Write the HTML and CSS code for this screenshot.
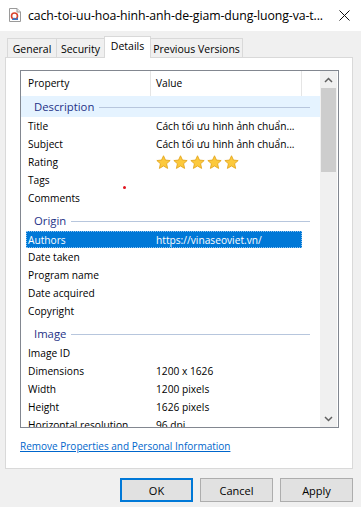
FILE: index.html
```html
<!DOCTYPE html>
<html lang="en">
<head>
    <meta charset="UTF-8">
    <meta name="viewport" content="width=device-width, initial-scale=1.0">
    <title>Properties</title>
    <link rel="stylesheet" href="styles.css">
</head>
<body>

    <div class="titlebar">
        <svg class="file-icon" width="12" height="14" viewBox="0 0 12 14">
            <path d="M0.5 0.5 H8 L11.5 4 V13.5 H0.5 Z" fill="#fff" stroke="#9a9a9a"/>
            <path d="M8 0.5 V4 H11.5" fill="#e8e8e8" stroke="#9a9a9a"/>
            <circle cx="5.5" cy="8" r="3" fill="none" stroke="#d9442f" stroke-width="1.6"/>
            <path d="M3 11.5 L5 9.5 L7 11 L9 9 V12 H3 Z" fill="#3a78c9"/>
        </svg>
        <span class="title">cach-toi-uu-hoa-hinh-anh-de-giam-dung-luong-va-t...</span>
        <svg class="close" width="11" height="11" viewBox="0 0 11 11">
            <path d="M0.5 0.5 L10.5 10.5 M10.5 0.5 L0.5 10.5" stroke="#111" stroke-width="1"/>
        </svg>
    </div>

    <div class="dialog">
        <!-- tab strip -->
        <div class="tabs">
            <div class="tab tab-general">General</div>
            <div class="tab tab-security">Security</div>
            <div class="tab tab-details active">Details</div>
            <div class="tab tab-versions">Previous Versions</div>
        </div>

        <div class="panel">
            <div class="listview">
                <div class="lv-content">
                    <div class="lv-header">
                        <div class="hcol hcol-prop">Property</div>
                        <div class="hcol hcol-value">Value</div>
                        <div class="hcol hcol-rest"></div>
                    </div>

                    <div class="group first hot"><span class="group-name">Description</span><span class="group-line"></span></div>
                    <div class="row"><span class="prop">Title</span><span class="val">Cách tối ưu hình ảnh chuẩn...</span></div>
                    <div class="row"><span class="prop">Subject</span><span class="val">Cách tối ưu hình ảnh chuẩn...</span></div>
                    <div class="row">
                        <span class="prop">Rating</span>
                        <span class="val stars">
                            <svg class="star" viewBox="0 0 16 16"><path d="M8 0.8 L10.1 5.4 L15.1 5.9 L11.3 9.3 L12.4 14.3 L8 11.7 L3.6 14.3 L4.7 9.3 L0.9 5.9 L5.9 5.4 Z"/></svg>
                            <svg class="star" viewBox="0 0 16 16"><path d="M8 0.8 L10.1 5.4 L15.1 5.9 L11.3 9.3 L12.4 14.3 L8 11.7 L3.6 14.3 L4.7 9.3 L0.9 5.9 L5.9 5.4 Z"/></svg>
                            <svg class="star" viewBox="0 0 16 16"><path d="M8 0.8 L10.1 5.4 L15.1 5.9 L11.3 9.3 L12.4 14.3 L8 11.7 L3.6 14.3 L4.7 9.3 L0.9 5.9 L5.9 5.4 Z"/></svg>
                            <svg class="star" viewBox="0 0 16 16"><path d="M8 0.8 L10.1 5.4 L15.1 5.9 L11.3 9.3 L12.4 14.3 L8 11.7 L3.6 14.3 L4.7 9.3 L0.9 5.9 L5.9 5.4 Z"/></svg>
                            <svg class="star" viewBox="0 0 16 16"><path d="M8 0.8 L10.1 5.4 L15.1 5.9 L11.3 9.3 L12.4 14.3 L8 11.7 L3.6 14.3 L4.7 9.3 L0.9 5.9 L5.9 5.4 Z"/></svg>
                        </span>
                    </div>
                    <div class="row"><span class="prop">Tags</span><span class="val"></span></div>
                    <div class="row"><span class="prop">Comments</span><span class="val"></span></div>

                    <div class="group"><span class="group-name">Origin</span><span class="group-line"></span></div>
                    <div class="row selected"><span class="prop">Authors</span><span class="val">https://vinaseoviet.vn/</span></div>
                    <div class="row"><span class="prop">Date taken</span><span class="val"></span></div>
                    <div class="row"><span class="prop">Program name</span><span class="val"></span></div>
                    <div class="row"><span class="prop">Date acquired</span><span class="val"></span></div>
                    <div class="row"><span class="prop">Copyright</span><span class="val"></span></div>

                    <div class="group"><span class="group-name">Image</span><span class="group-line"></span></div>
                    <div class="row"><span class="prop">Image ID</span><span class="val"></span></div>
                    <div class="row"><span class="prop">Dimensions</span><span class="val">1200 x 1626</span></div>
                    <div class="row"><span class="prop">Width</span><span class="val">1200 pixels</span></div>
                    <div class="row"><span class="prop">Height</span><span class="val">1626 pixels</span></div>
                    <div class="row"><span class="prop">Horizontal resolution</span><span class="val">96 dpi</span></div>
                </div>

                <div class="scrollbar">
                    <div class="sb-btn">
                        <svg width="9" height="6" viewBox="0 0 9 6"><path d="M1 5 L4.5 1.5 L8 5" fill="none" stroke="#606060" stroke-width="1.5"/></svg>
                    </div>
                    <div class="sb-track"><div class="sb-thumb"></div></div>
                    <div class="sb-btn">
                        <svg width="9" height="6" viewBox="0 0 9 6"><path d="M1 1 L4.5 4.5 L8 1" fill="none" stroke="#606060" stroke-width="1.5"/></svg>
                    </div>
                </div>

                <span class="red-dot"></span>
            </div>

            <a class="link" href="#">Remove Properties and Personal Information</a>
        </div>

        <div class="buttons">
            <button class="btn default">OK</button>
            <button class="btn">Cancel</button>
            <button class="btn">Apply</button>
        </div>
    </div>

</body>
</html>
```

FILE: styles.css
```css
body {
    margin: 0;
    padding: 0;
    width: 361px;
    height: 507px;
    overflow: hidden;
    background: #f0f0f0;
    font-family: "Open Sans", "Liberation Sans", Arial, sans-serif;
    font-size: 10.2px;
    color: #000;
}
.titlebar {
    height: 31px;
    background: #fff;
    display: flex;
    align-items: center;
    padding-left: 9px;
    box-sizing: border-box;
}
.file-icon {
    margin-right: 7px;
    margin-top: -1px;
}
.title {
    font-size: 12.3px;
    color: #000;
    white-space: nowrap;
    letter-spacing: -0.1px;
}
.close {
    margin-left: auto;
    margin-right: 11px;
}
.dialog {
    padding: 5px 8px 0 5px;
}
/* tabs */
.tabs {
    display: flex;
    align-items: flex-end;
    height: 21px;
    padding-left: 2px;
    position: relative;
    z-index: 1;
}
.tab {
    height: 19px;
    box-sizing: border-box;
    border: 1px solid #d9d9d9;
    border-bottom: none;
    border-right: none;
    background: #f0f0f0;
    text-align: center;
    line-height: 18px;
    padding-top: 1px;
    font-size: 10.5px;
}
.tab-general { width: 49px; }
.tab-security { width: 48px; }
.tab-details { width: 47px; }
.tab-versions { width: 92px; border-right: 1px solid #d9d9d9; }
.tab.active {
    height: 22px;
    margin-bottom: -1px;
    background: #fff;
    border-right: 1px solid #d9d9d9;
    line-height: 18px;
    padding-top: 0;
}
.tab.active + .tab {
    border-left: none;
}
.panel {
    background: #fff;
    border: 1px solid #d9d9d9;
    height: 412px;
    box-sizing: border-box;
    padding: 12px 0 0 14px;
}
/* details list */
.listview {
    position: relative;
    width: 319px;
    height: 358px;
    box-sizing: border-box;
    border: 1px solid #828790;
    display: flex;
    overflow: hidden;
}
.lv-content {
    width: 299px;
    overflow: hidden;
}
.lv-header {
    display: flex;
    height: 25px;
    line-height: 24px;
}
.hcol {
    border-right: 1px solid #e5e5e5;
    box-sizing: border-box;
}
.hcol-prop { width: 130px; padding-left: 7px; }
.hcol-value { width: 151px; padding-left: 5px; }
.hcol-rest { flex: 1; border-right: none; }
.group {
    display: flex;
    align-items: center;
    height: 24px;
    padding: 3px 10px 0 13px;
    box-sizing: border-box;
    color: #1e3287;
    font-size: 11.3px;
}
.group.first {
    height: 21px;
    padding-top: 0;
}
.group.hot {
    background: #e5f3ff;
}
.group-line {
    flex: 1;
    height: 1px;
    background: #b7c6dd;
    margin-left: 5px;
    margin-top: 1px;
}
.row {
    display: flex;
    height: 18px;
    line-height: 19px;
    margin-left: 5px;
    width: 276px;
    box-sizing: border-box;
    white-space: nowrap;
}
.prop {
    width: 128px;
    padding-left: 2px;
    box-sizing: border-box;
}
.val {
    flex: 1;
    padding-left: 2px;
    overflow: hidden;
}
.row.selected {
    height: 17px;
    background: #0078d7;
    color: #fff;
    border: 1px dotted #8fc3ef;
    line-height: 16px;
}
.row.selected .prop { padding-left: 1px; }
.row.selected .val { padding-left: 1px; }
.stars {
    display: flex;
    align-items: center;
    gap: 2px;
    padding-top: 1px;
}
.star {
    width: 15px;
    height: 15px;
    fill: #fcc93c;
    stroke: #e3a41a;
    stroke-width: 0.9;
}
/* scrollbar */
.scrollbar {
    width: 17px;
    display: flex;
    flex-direction: column;
    background: #f0f0f0;
}
.sb-btn {
    height: 17px;
    display: flex;
    align-items: center;
    justify-content: center;
}
.sb-track {
    flex: 1;
}
.sb-thumb {
    height: 84px;
    margin: 0 1px;
    background: #cdcdcd;
}
.red-dot {
    position: absolute;
    left: 102px;
    top: 115px;
    width: 3px;
    height: 3px;
    border-radius: 50%;
    background: #e0141e;
}
.link {
    display: block;
    margin: 11px 0 0 0;
    color: #0066cc;
    line-height: 14px;
    font-size: 10px;
}
/* buttons */
.buttons {
    display: flex;
    justify-content: flex-end;
    gap: 7px;
    padding-top: 9px;
}
.btn {
    width: 73px;
    height: 24px;
    background: #e1e1e1;
    border: 1px solid #adadad;
    font-family: "Open Sans", "Liberation Sans", Arial, sans-serif;
    font-size: 11px;
    color: #000;
    padding: 0;
}
.btn.default {
    border: 2px solid #0078d7;
}
```
